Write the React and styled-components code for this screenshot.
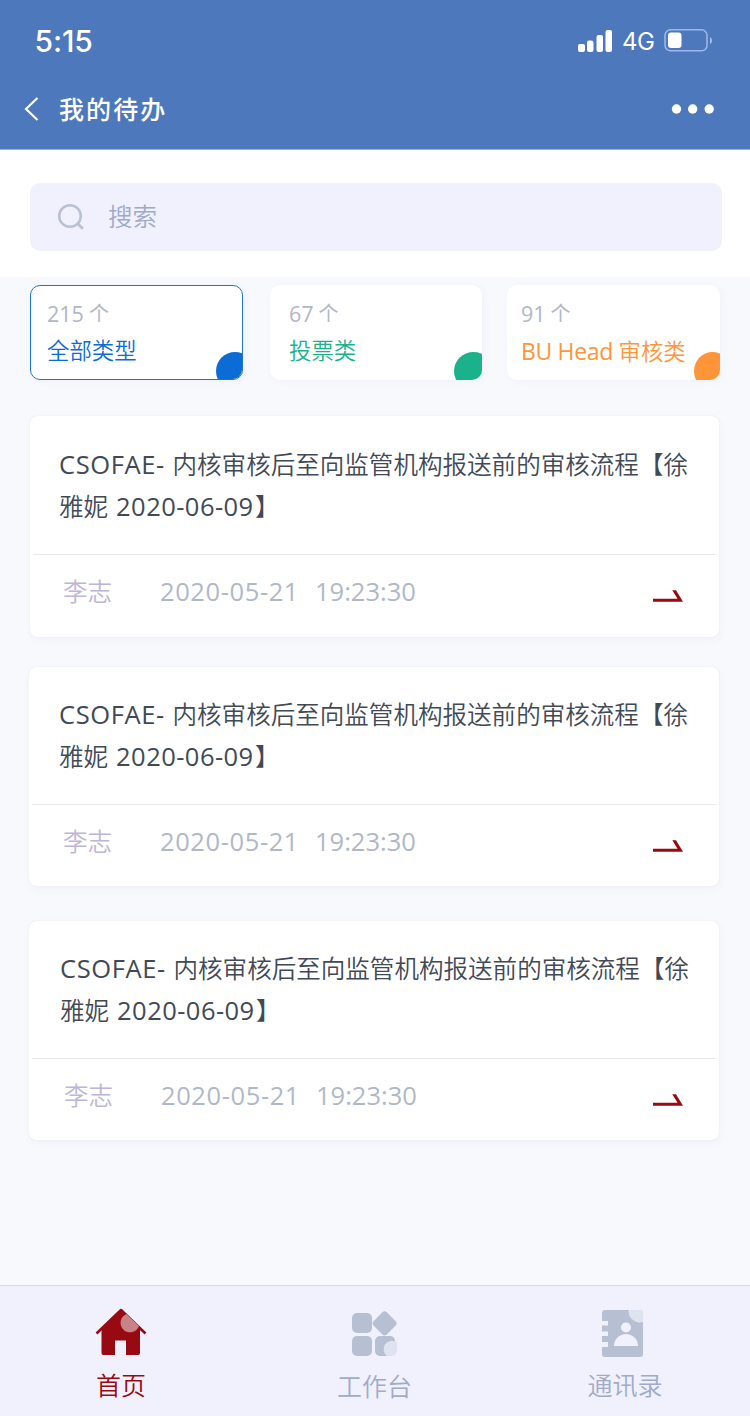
import React from "react";
import styled, { createGlobalStyle } from "styled-components";

const Global = createGlobalStyle`
  * { box-sizing: border-box; }
  body { margin: 0; background: #f8f9fd; }
`;

const Page = styled.div`
  width: 750px;
  height: 1416px;
  display: flex;
  flex-direction: column;
  overflow: hidden;
  background: #f8f9fd;
  font-family: "Open Sans", "Noto Sans CJK SC", sans-serif;
  white-space: nowrap;
`;

const Header = styled.header`
  height: 150px;
  flex: none;
  background: #4d78bc;
  border-bottom: 1px solid #a9adb9;
  color: #fff;
`;

const StatusBar = styled.div`
  height: 80px;
  display: flex;
  align-items: center;
  justify-content: space-between;
  padding: 2px 37px 0 34.5px;
`;

const Clock = styled.span`
  font: 500 30px/40px Inter, sans-serif;
  letter-spacing: -0.1px;
`;

const Indicators = styled.div`
  display: flex;
  align-items: center;
  gap: 10px;
`;

const Network = styled.span`
  font: 400 24px/30px Inter, sans-serif;
  letter-spacing: -0.4px;
  width: 32px;
  padding-top: 1px;
`;

const TitleBar = styled.div`
  height: 57px;
  display: flex;
  align-items: center;
  padding: 0 35px 0 24px;
`;

const PageTitle = styled.h1`
  margin: 0 auto 0 19px;
  font-size: 25px;
  line-height: 36px;
  font-weight: 500;
  letter-spacing: 2.1px;
`;

const SearchArea = styled.div`
  height: 127px;
  flex: none;
  padding: 33px 28px 26px 30px;
  background: #fff;
`;

const SearchBox = styled.div`
  height: 68px;
  border-radius: 10px;
  background: #f1f1fd;
  display: flex;
  align-items: center;
  padding-left: 27px;
  gap: 23px;
  color: #a0aac8;
  font-size: 24.5px;
  line-height: 34px;
  font-weight: 350;
`;

const Filters = styled.div`
  display: flex;
  padding: 8px 30px 0;
  height: 139px;
  flex: none;
`;

const FilterCard = styled.div`
  position: relative;
  overflow: hidden;
  width: ${(p) => p.$width}px;
  height: 95px;
  margin-right: ${(p) => p.$gap}px;
  padding: ${(p) => (p.$active ? 12 : 13)}px 0 0 ${(p) => p.$inset}px;
  border: ${(p) => (p.$active ? "1px solid #1f74d0" : "0 solid #fff")};
  border-radius: 10px;
  background: #fff;
  box-shadow: 2px 2px 8px rgba(70, 80, 130, 0.04);
`;

const Count = styled.div`
  display: flex;
  gap: 5px;
  height: 32px;
  font-size: 20px;
  line-height: 32px;
  color: #b0b7c8;
`;

const Figure = styled.span`
  font-size: 21.5px;
`;

const Category = styled.div`
  height: 32px;
  font-size: 22.4px;
  line-height: 32px;
  margin-top: 5px;
  font-weight: 350;
  color: ${(p) => p.$color};
`;

const CategoryLatin = styled.span`
  font-size: 23px;
  font-weight: 400;
  letter-spacing: -0.35px;
`;

const Corner = styled.span`
  position: absolute;
  right: ${(p) => p.$offset}px;
  bottom: ${(p) => p.$offset + 1}px;
  width: ${(p) => p.$size}px;
  height: 38px;
  border-radius: 50%;
  background: ${(p) => p.$color};
`;

const TaskList = styled.main`
  flex: 1;
  display: flex;
  flex-direction: column;
  align-items: flex-start;
  padding-left: 29px;
`;

const TaskCard = styled.article`
  width: ${(p) => p.$width}px;
  margin: 0 0 ${(p) => p.$gap}px ${(p) => p.$shift}px;
  border-radius: 7px;
  background: #fff;
  box-shadow: 1px 3px 8px rgba(70, 80, 130, 0.04), 0 0 1px rgba(70, 80, 130, 0.18);
`;

const TaskTitle = styled.div`
  height: ${(p) => p.$height}px;
  margin: 0 3px;
  padding: ${(p) => p.$height - 111}px 0 0 ${(p) => p.$inset}px;
  border-bottom: 1px solid #e9e9ec;
  font-size: 24.55px;
  line-height: 42px;
  font-weight: 350;
  color: #414956;
`;

const TitleLine = styled.div`
  height: 42px;
  display: flex;
`;

const Code = styled.span`
  width: 113.5px;
  font-size: 25.5px;
  line-height: 40px;
  font-weight: 400;
  letter-spacing: 0.6px;
`;

const TitleDate = styled.span`
  width: 147px;
  padding-left: 8px;
  font-size: 25.5px;
  line-height: 40px;
  font-weight: 400;
  letter-spacing: 0.45px;
`;

const TaskMeta = styled.div`
  height: ${(p) => p.$height}px;
  padding: 17px 36px 0 ${(p) => p.$inset}px;
  display: flex;
  font-size: 25.5px;
  line-height: 38px;
  color: #b0b8c8;
`;

const Author = styled.span`
  width: 97px;
  font-size: 24.5px;
  line-height: 40px;
  font-weight: 350;
  color: #bdb6d6;
`;

const Stamp = styled.span`
  width: ${(p) => p.$width}px;
  letter-spacing: ${(p) => p.$spacing}px;
`;

const ArrowIcon = styled.svg`
  margin: 18px 0 0 auto;
`;

const TabBar = styled.nav`
  height: 131px;
  flex: none;
  display: flex;
  background: #f1f1fd;
  border-top: 1px solid #dadaeb;
`;

const Tab = styled.div`
  width: ${(p) => p.$width}px;
  display: flex;
  flex-direction: column;
  align-items: center;
  padding-top: ${(p) => p.$top}px;
  color: ${(p) => (p.$active ? "#980a12" : "#a1abc7")};
  font-size: 25px;
  line-height: 36px;
  font-weight: 350;
`;

const TabLabel = styled.span`
  margin-top: ${(p) => p.$top}px;
`;

const filters = [
  { count: "215", name: "全部类型", color: "#0b6cd6", width: 213, gap: 27, inset: 16, corner: 38, active: true },
  { count: "67", name: "投票类", color: "#1bb28b", width: 212, gap: 25, inset: 19, corner: 39 },
  { count: "91", latin: "BU Head", name: "审核类", color: "#ff9539", width: 213, gap: 0, inset: 14, corner: 37 },
];

const tasks = [
  { width: 689, shift: 1, gap: 30, title: 139, inset: 26, meta: 82, metaInset: 33 },
  { width: 690, shift: 0, gap: 35, title: 138, inset: 27, meta: 81, metaInset: 34 },
  { width: 690, shift: 0, gap: 0, title: 138, inset: 28, meta: 81, metaInset: 35 },
];

function Status() {
  return (
    <StatusBar>
      <Clock>5:15</Clock>
      <Indicators>
        <svg width="34" height="23" viewBox="0 0 34 23" fill="#fff">
          <rect x="0" y="14" width="7" height="8" rx="2" />
          <rect x="9" y="10.500" width="6.500" height="11.500" rx="2" />
          <rect x="18.500" y="5" width="6.500" height="17" rx="2" />
          <rect x="27.500" y="0" width="6.500" height="22" rx="2" />
        </svg>
        <Network>4G</Network>
        <svg width="49" height="24" viewBox="0 0 49 24">
          <rect x="1" y="0.800" width="42" height="21" rx="5.500" fill="none" stroke="#9eb9e9" strokeWidth="1.500" />
          <rect x="4" y="3.500" width="13.500" height="15.500" rx="3" fill="#fff" />
          <path d="M46 8q2 1 2 3.500t-2 3.500z" fill="#a9c1ea" />
        </svg>
      </Indicators>
    </StatusBar>
  );
}

function HomeIcon() {
  return (
    <svg width="52" height="50" viewBox="0 0 52 50">
      <path d="M26 4 45 22V47a2 2 0 0 1-2 2H31V34.500H20V49H8.500a2 2 0 0 1-2-2V22z" fill="#980a12" />
      <path d="M1.500 27.500 26 4 50.500 27.500" fill="none" stroke="#980a12" strokeWidth="2.600" strokeLinejoin="round" />
      <path d="M31.500 8 44 20A9.500 9.500 0 1 1 31.500 8z" fill="#c98388" />
    </svg>
  );
}

function WorkIcon() {
  return (
    <svg width="46" height="50" viewBox="0 0 46 50" fill="#b7c0d2">
      <rect x="0" y="5" width="20" height="20" rx="5" />
      <rect x="0" y="28" width="20" height="20" rx="5" />
      <rect x="23" y="28" width="20" height="20" rx="5" />
      <rect x="23.200" y="6" width="18.800" height="18.800" rx="3.500" transform="rotate(45 32.600 15.400)" />
      <path d="M45 34.500V43a5 5 0 0 1-5 5h-5A7.200 7.200 0 1 1 45 34.500z" fill="#dfe3ef" />
    </svg>
  );
}

function ContactsIcon() {
  return (
    <svg width="46" height="50" viewBox="0 0 46 50">
      <rect x="0" y="2" width="41" height="47" rx="3" fill="#b7c0d2" />
      <path d="M0 13h6v4.500H0zM0 23.500h6V28H0zM0 34h6v5H0z" fill="#f1f1fd" />
      <circle cx="24" cy="19.500" r="5" fill="#f1f1fd" />
      <path d="M12 38a12 12 0 0 1 24 0z" fill="#f1f1fd" />
      <path d="M26.500 2H38a3 3 0 0 1 3 3V14A11.500 11.500 0 0 1 26.500 2z" fill="#dfe3ef" />
    </svg>
  );
}

export default function App() {
  return (
    <Page>
      <Global />
      <Header>
        <Status />
        <TitleBar>
          <svg width="16" height="24" viewBox="0 0 16 24" fill="none" stroke="#fff" strokeWidth="2.200">
            <path d="M13.500 1 2 12l11.500 11" />
          </svg>
          <PageTitle>我的待办</PageTitle>
          <svg width="44" height="10" viewBox="0 0 44 10" fill="#fff">
            <circle cx="5.500" cy="5" r="4.700" />
            <circle cx="21.700" cy="5" r="4.700" />
            <circle cx="38.200" cy="5" r="4.700" />
          </svg>
        </TitleBar>
      </Header>
      <SearchArea>
        <SearchBox>
          <svg width="28" height="28" viewBox="0 0 28 28" fill="none" stroke="#b9c2d3" strokeWidth="2.600">
            <circle cx="13" cy="13" r="10.800" />
            <path d="m20.500 20.500 5.300 5.300" strokeWidth="3" />
          </svg>
          搜索
        </SearchBox>
      </SearchArea>
      <Filters>
        {filters.map((f) => (
          <FilterCard key={f.name} $width={f.width} $gap={f.gap} $inset={f.inset} $active={f.active}>
            <Count>
              <Figure>{f.count}</Figure>
              <span>个</span>
            </Count>
            <Category $color={f.color}>
              {f.latin && <CategoryLatin>{f.latin} </CategoryLatin>}
              {f.name}
            </Category>
            <Corner $color={f.color} $size={f.corner} $offset={f.active ? -12 : -11} />
          </FilterCard>
        ))}
      </Filters>
      <TaskList>
        {tasks.map((t, i) => (
          <TaskCard key={i} $width={t.width} $shift={t.shift} $gap={t.gap}>
            <TaskTitle $height={t.title} $inset={t.inset}>
              <TitleLine>
                <Code>CSOFAE-</Code>内核审核后至向监管机构报送前的审核流程【徐
              </TitleLine>
              <TitleLine>
                雅妮<TitleDate>2020-06-09</TitleDate>】
              </TitleLine>
            </TaskTitle>
            <TaskMeta $height={t.meta} $inset={t.metaInset}>
              <Author>李志</Author>
              <Stamp $width={155} $spacing={0.6}>2020-05-21</Stamp>
              <Stamp $width={110} $spacing={0}>19:23:30</Stamp>
              <ArrowIcon width="30" height="12" viewBox="0 0 30 12" fill="#980a12">
                <path d="M0 8.700H24.500L19.300 0.200H23L30 11.700H0z" />
              </ArrowIcon>
            </TaskMeta>
          </TaskCard>
        ))}
      </TaskList>
      <TabBar>
        <Tab $width={242} $top={20} $active>
          <HomeIcon />
          <TabLabel $top={11}>首页</TabLabel>
        </Tab>
        <Tab $width={265} $top={22}>
          <WorkIcon />
          <TabLabel $top={10}>工作台</TabLabel>
        </Tab>
        <Tab $width={236} $top={22}>
          <ContactsIcon />
          <TabLabel $top={9}>通讯录</TabLabel>
        </Tab>
      </TabBar>
    </Page>
  );
}
